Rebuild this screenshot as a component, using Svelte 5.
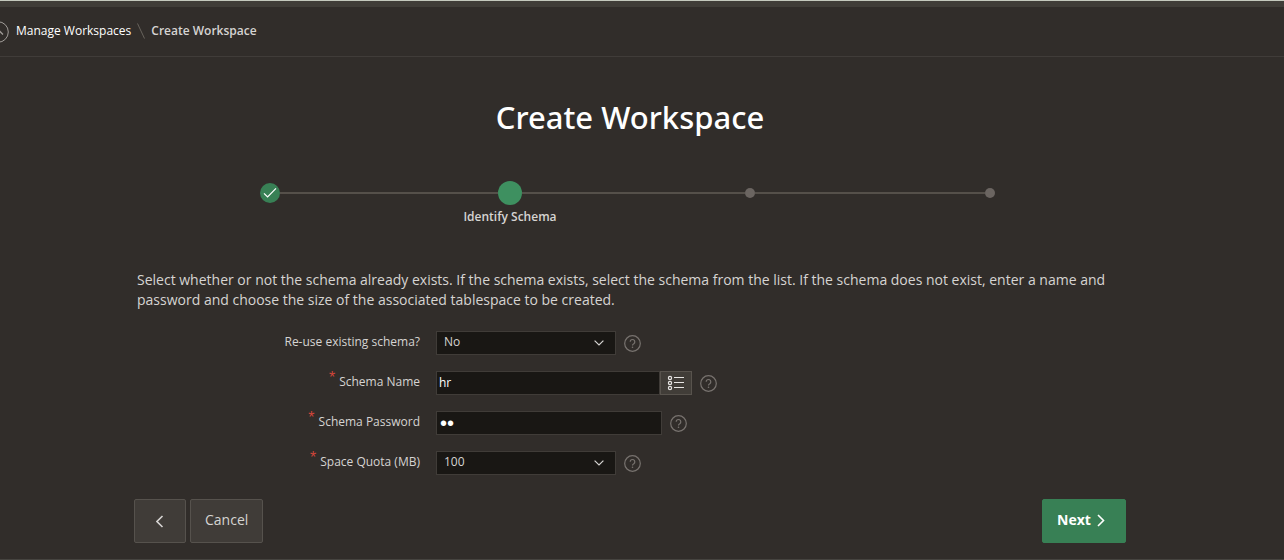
<script>
  let reuse = $state('No');
  let name = $state('hr');
  let password = $state('hr');
  let quota = $state('100');

  const steps = [
    { state: 'done', label: '' },
    { state: 'current', label: 'Identify Schema' },
    { state: 'todo', label: '' },
    { state: 'todo', label: '' }
  ];
</script>

{#snippet help()}
  <button class="help" type="button" aria-label="Help">
    <svg width="17" height="17" viewBox="0 0 17 17" fill="none" stroke="currentColor">
      <circle cx="8.5" cy="8.5" r="7.8" stroke-width="1.2" />
      <path d="M6.2 6.8a2.3 2.3 0 1 1 3.6 1.9c-.9.5-1.3.9-1.3 1.7" stroke-width="1.2" />
      <circle cx="8.5" cy="12.3" r=".8" fill="currentColor" stroke="none" />
    </svg>
  </button>
{/snippet}

{#snippet chevron()}
  <svg class="chevron" width="10" height="6" viewBox="0 0 10 6" fill="none" stroke="currentColor" stroke-width="1.2">
    <path d="M.6.6 5 5 9.4.6" />
  </svg>
{/snippet}

<div class="page">
  <header>
    <a class="up" href="#up" aria-label="Up one level">
      <svg width="22" height="22" viewBox="0 0 22 22" fill="none" stroke="currentColor">
        <circle cx="11" cy="11" r="10.3" />
        <path d="m8 13.5 4-4 4 4" stroke-width="1.3" />
      </svg>
    </a>
    <nav aria-label="Breadcrumb">
      <a href="#workspaces">Manage Workspaces</a>
      <svg width="8" height="16" viewBox="0 0 8 16" fill="none" stroke="#68635d"><path d="M.5.5l7 15" /></svg>
      <strong>Create Workspace</strong>
    </nav>
  </header>

  <main>
    <h1>Create Workspace</h1>

    <ol class="steps">
      {#each steps as step}
        <li class={step.state}>
          <span class="track">
            <span class="dot">
              {#if step.state === 'done'}
                <svg width="14" height="12" viewBox="0 0 14 12" fill="none" stroke="#fff" stroke-width="1.2">
                  <path d="M1 6.3 4.6 10 13 1.3" />
                </svg>
              {/if}
            </span>
          </span>
          {#if step.label}<span class="name">{step.label}</span>{/if}
        </li>
      {/each}
    </ol>

    <p>
      Select whether or not the schema already exists. If the schema exists, select the schema from the list. If the
      schema does not exist, enter a name and password and choose the size of the associated tablespace to be created.
    </p>

    <form>
      <div class="row">
        <label for="reuse">Re-use existing schema?</label>
        <div class="control">
          <span class="select">
            <select id="reuse" bind:value={reuse}><option>No</option><option>Yes</option></select>
            {@render chevron()}
          </span>
          {@render help()}
        </div>
      </div>
      <div class="row">
        <label for="name"><span class="req">*</span>Schema Name</label>
        <div class="control">
          <span class="group">
            <input id="name" type="text" bind:value={name} />
            <button class="lov" type="button" aria-label="List of schemas">
              <svg width="18" height="16" viewBox="0 0 18 16" fill="none" stroke="currentColor" stroke-width="1.2">
                <circle cx="3" cy="3" r="1.6" /><circle cx="3" cy="8" r="1.6" /><circle cx="3" cy="13" r="1.6" />
                <path d="M7 2.5h10M7 7.5h10M7 12.5h10" />
              </svg>
            </button>
          </span>
          {@render help()}
        </div>
      </div>
      <div class="row">
        <label for="password"><span class="req">*</span>Schema Password</label>
        <div class="control">
          <input id="password" type="password" bind:value={password} />
          {@render help()}
        </div>
      </div>
      <div class="row">
        <label for="quota"><span class="req">*</span>Space Quota (MB)</label>
        <div class="control">
          <span class="select">
            <select id="quota" bind:value={quota}><option>100</option><option>250</option><option>500</option></select>
            {@render chevron()}
          </span>
          {@render help()}
        </div>
      </div>
    </form>

    <div class="actions">
      <button class="btn back" type="button" aria-label="Previous">
        <svg width="8" height="13" viewBox="0 0 8 13" fill="none" stroke="currentColor" stroke-width="1.6"><path d="M6.5 1 1 6.5 6.5 12" /></svg>
      </button>
      <button class="btn" type="button">Cancel</button>
      <button class="btn next" type="button">
        Next
        <svg width="8" height="13" viewBox="0 0 8 13" fill="none" stroke="currentColor" stroke-width="1.6"><path d="m1 1 5.5 5.5L1 12" /></svg>
      </button>
    </div>
  </main>
</div>

<style>
  :global(body) {
    margin: 0;
    background: #312d2a;
  }
  .page {
    box-sizing: border-box;
    min-height: 100vh;
    border-top: 1px solid #c4c9bd;
    border-bottom: 1px solid #464440;
    background: #312d2a;
    color: #d6d4d2;
    font: 12px/16px "Open Sans", "Noto Sans", sans-serif;
    overflow: hidden;
  }
  button, input, select {
    box-sizing: border-box;
    margin: 0;
    font: inherit;
    color: inherit;
  }
  svg {
    display: block;
    flex: none;
  }
  header {
    display: flex;
    align-items: center;
    gap: 7px;
    height: 49px;
    border-top: 6px solid #403d38;
    border-bottom: 1px solid #403c39;
  }
  .up {
    margin-left: -13px;
    color: #a09c98;
  }
  nav {
    display: flex;
    align-items: center;
    gap: 6px;
    padding-bottom: 2px;
  }
  nav a {
    color: #fff;
    text-decoration: none;
  }
  nav strong {
    font-weight: 600;
  }
  main {
    max-width: 992px;
    margin: 0 auto;
    padding: 40px 24px 0 0;
  }
  h1 {
    margin: 0;
    color: #fff;
    font-family: "Noto Sans", "Open Sans", sans-serif;
    font-size: 31px;
    line-height: 40px;
    font-weight: 500;
    text-align: center;
  }
  .steps {
    display: grid;
    grid-template-columns: repeat(4, 1fr);
    max-width: 960px;
    margin: 44px auto 0;
    padding: 0;
    list-style: none;
    text-align: center;
    font-weight: 600;
  }
  .track {
    display: grid;
    grid-template-columns: 1fr auto 1fr;
    align-items: center;
    height: 24px;
    margin-bottom: 4px;
  }
  .track::before, .track::after {
    content: "";
    height: 2px;
    background: #55504a;
  }
  li:first-child .track::before, li:last-child .track::after {
    background: none;
  }
  .dot {
    display: grid;
    place-items: center;
    width: 10px;
    height: 10px;
    border-radius: 50%;
    background: #6b6561;
  }
  .done .dot {
    width: 20px;
    height: 20px;
    background: #388055;
  }
  .current .dot {
    width: 24px;
    height: 24px;
    background: #3e9060;
  }
  .name {
    display: block;
  }
  p {
    margin: 45px 3px 0;
    font-size: 14px;
    line-height: 20px;
  }
  form {
    display: grid;
    gap: 16px;
    margin-top: 21px;
  }
  .row {
    display: grid;
    grid-template-columns: 286px 1fr;
    gap: 16px;
    height: 24px;
  }
  label {
    display: flex;
    justify-content: flex-end;
    gap: 4px;
    padding-top: 3px;
  }
  .req {
    color: #d0453a;
    font-family: "Liberation Sans", Arial, sans-serif;
    font-size: 16px;
    line-height: 8px;
  }
  .control {
    display: flex;
    align-items: center;
    gap: 8px;
  }
  .group {
    display: flex;
  }
  input, select {
    height: 24px;
    border: 1px solid #403c38;
    border-radius: 0;
    background: #191714;
    outline: none;
  }
  input {
    width: 226px;
    padding: 0 2px 2px;
    color: #fff;
  }
  input[type="password"] {
    padding: 0 3px;
    font-family: "Liberation Sans", Arial, sans-serif;
    font-size: 20px;
  }
  .group input {
    width: 224px;
  }
  .select {
    position: relative;
    width: 180px;
  }
  select {
    display: block;
    width: 100%;
    padding: 0 24px 2px 7px;
    appearance: none;
  }
  .chevron {
    position: absolute;
    right: 12px;
    top: 9px;
    pointer-events: none;
  }
  .lov {
    display: grid;
    place-items: center;
    width: 32px;
    height: 24px;
    padding: 0;
    border: 1px solid #58534d;
    background: #413d38;
    color: #e8e6e4;
  }
  .help {
    padding: 0;
    border: 0;
    background: none;
    color: #78736f;
  }
  .actions {
    display: flex;
    gap: 4px;
    margin-top: 24px;
  }
  .btn {
    display: flex;
    align-items: center;
    justify-content: center;
    gap: 6px;
    height: 44px;
    min-width: 52px;
    padding: 0 14px 2px;
    border: 1px solid #56524d;
    border-radius: 2px;
    background: #403c38;
    font-size: 14px;
    line-height: 20px;
  }
  .back {
    padding-bottom: 0;
  }
  .next {
    min-width: 84px;
    padding-right: 20px;
    margin-left: auto;
    border-color: #388055;
    background: #388055;
    color: #fff;
    font-weight: 700;
  }
</style>
